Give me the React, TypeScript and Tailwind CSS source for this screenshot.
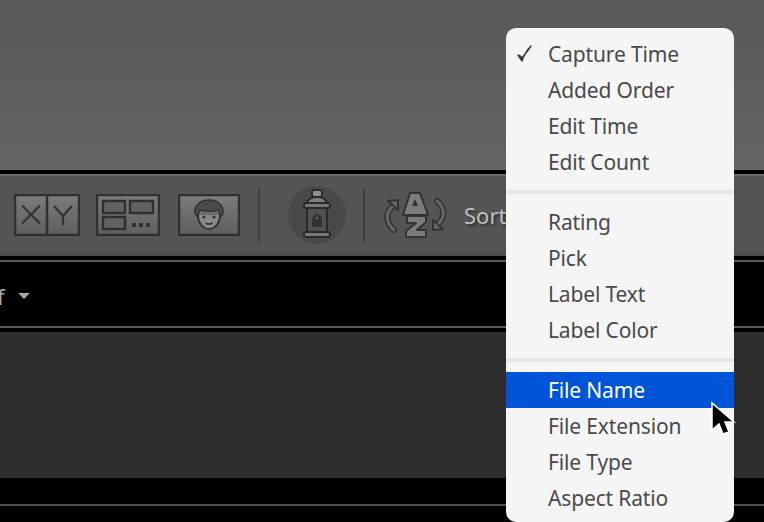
import React from 'react';

const groups = [
  ['Capture Time', 'Added Order', 'Edit Time', 'Edit Count'],
  ['Rating', 'Pick', 'Label Text', 'Label Color'],
  ['File Name', 'File Extension', 'File Type', 'Aspect Ratio'],
];

const XYIcon = () => (
  <svg width="66" height="42" viewBox="0 0 66 42" fill="none">
    <defs>
      <linearGradient id="btn" x1="0" y1="0" x2="0" y2="1">
        <stop offset="0" stopColor="#7c7c7c" />
        <stop offset="1" stopColor="#5e5e5e" />
      </linearGradient>
    </defs>
    <rect x="1" y="1" width="64" height="40" fill="url(#btn)" stroke="#303030" strokeWidth="2.500" />
    <path d="M33 1v40" stroke="#303030" strokeWidth="2.500" />
    <path d="M8 11.500l18 18M26 11.500l-18 18" stroke="#333" strokeWidth="2.200" />
    <path d="M40 12l9 10 9-10M49 22v9" stroke="#333" strokeWidth="2.200" />
  </svg>
);

const MetaIcon = () => (
  <svg width="64" height="42" viewBox="0 0 64 42" fill="none">
    <rect x="1" y="1" width="62" height="40" fill="url(#btn)" stroke="#303030" strokeWidth="2.500" />
    <rect x="7" y="7" width="22" height="12" fill="#626262" stroke="#303030" strokeWidth="2.500" />
    <rect x="34" y="7" width="23" height="12" fill="#626262" stroke="#303030" strokeWidth="2.500" />
    <rect x="7" y="23" width="22" height="12" fill="#626262" stroke="#303030" strokeWidth="2.500" />
    <path d="M36 29h4v4h-4zM43 29h4v4h-4zM50 29h4v4h-4z" fill="#303030" />
  </svg>
);

const FaceIcon = () => (
  <svg width="62" height="42" viewBox="0 0 62 42" fill="none">
    <rect x="1" y="1" width="60" height="40" fill="url(#btn)" stroke="#303030" strokeWidth="2.500" />
    <path d="M20 21c0 8 5 14 11 14s11-6 11-14" fill="#8a8a8a" stroke="#333" strokeWidth="2" />
    <path d="M17 20c-1.500-8 5-14 14-14s15.500 6 14 14l-3 3c0-3-.5-5-2-7-5 1.500-13 1.500-18 0-1.500 2-2 4-2 7z" fill="#4a4a4a" stroke="#333" strokeWidth="1.500" strokeLinejoin="round" />
    <circle cx="26" cy="23" r="1.600" fill="#333" />
    <circle cx="36" cy="23" r="1.600" fill="#333" />
    <path d="M27.500 29c2 1.200 5 1.200 7 0" stroke="#333" strokeWidth="1.500" />
  </svg>
);

const SprayIcon = () => (
  <svg width="58" height="58" viewBox="0 0 58 58" fill="none">
    <circle cx="29" cy="29" r="29" fill="#494949" />
    <rect x="24" y="4" width="10" height="7" rx="2" fill="#8f8f8f" stroke="#2a2a2a" strokeWidth="2" />
    <path d="M19 17c1-4 5-6 10-6s9 2 10 6z" fill="#7f7f7f" stroke="#2a2a2a" strokeWidth="2" />
    <rect x="16" y="17" width="26" height="5" rx="2" fill="#777" stroke="#2a2a2a" strokeWidth="2" />
    <rect x="19" y="22" width="20" height="24" fill="#505050" stroke="#2a2a2a" strokeWidth="2" />
    <rect x="16" y="46" width="26" height="5" rx="2" fill="#777" stroke="#2a2a2a" strokeWidth="2" />
    <path d="M29 27l5 5v9H24v-9z" fill="#333" />
    <circle cx="29" cy="32" r="1.200" fill="#666" />
  </svg>
);

const SortIcon = () => (
  <svg width="66" height="50" viewBox="0 0 66 50" fill="none">
    {/* left arrow */}
    <path d="M9 17C2 23 3 33 11 40" stroke="#333" strokeWidth="6" strokeLinecap="round" />
    <path d="M5 11l10-1v10z" fill="#666" stroke="#333" strokeWidth="2" strokeLinejoin="round" />
    <path d="M9 17C2 23 3 33 11 40" stroke="#666" strokeWidth="3" strokeLinecap="round" />
    {/* right arrow */}
    <path d="M54 11C62 18 62 27 56 33" stroke="#333" strokeWidth="6" strokeLinecap="round" />
    <path d="M60 39l-10 1V30z" fill="#666" stroke="#333" strokeWidth="2" strokeLinejoin="round" />
    <path d="M54 11C62 18 62 27 56 33" stroke="#666" strokeWidth="3" strokeLinecap="round" />
    {/* A over Z */}
    <path d="M27 3h10l8 22H20z" fill="#7c7c7c" stroke="#333" strokeWidth="2" strokeLinejoin="round" />
    <path d="M29 16l3-7 3 7z" fill="#333" />
    <path d="M24 26h19v6l-9 8h9v7H23v-6l10-8h-9z" fill="#7c7c7c" stroke="#333" strokeWidth="2" strokeLinejoin="round" />
  </svg>
);

export default function App() {
  return (
    <div className="relative w-[764px] h-[522px] overflow-hidden bg-black font-['Noto_Sans',sans-serif]">
      <div className="h-[170px] bg-gradient-to-b from-[#585858] to-[#646464]" />
      <div className="h-[4px] bg-black" />
      <div className="h-[2px] bg-[#6a6a6a]" />

      {/* library filter toolbar */}
      <div className="h-[80px] bg-[#545454] border-b-[4px] border-[#4c4c4c] flex items-center pl-[14px] pt-[2px]">
        <XYIcon />
        <div className="ml-[16px]"><MetaIcon /></div>
        <div className="ml-[18px]"><FaceIcon /></div>
        <div className="ml-[18px] w-[2px] h-[54px] bg-[#404040]" />
        <div className="ml-[28px]"><SprayIcon /></div>
        <div className="ml-[17px] w-[2px] h-[54px] bg-[#404040]" />
        <div className="ml-[18px]"><SortIcon /></div>
        <span className="ml-[15px] text-[22px] text-[#bdbdbd] [text-shadow:2px_2px_2px_#333]">Sort</span>
      </div>

      <div className="h-[4px] bg-black" />
      <div className="h-[2px] bg-[#5a5a5a]" />
      <div className="h-[64px] bg-black flex items-center text-[#a8a8a8] text-[22px] -ml-[3px] pt-[4px]">
        <span className="leading-none">f</span>
        <span className="ml-[13px] w-0 h-0 border-x-[6px] border-x-transparent border-t-[6px] border-t-[#a8a8a8]" />
      </div>
      <div className="h-[2px] bg-[#5a5a5a]" />
      <div className="h-[4px] bg-black" />
      <div className="h-[146px] bg-[#2e2e2e]" />
      <div className="h-[26px] bg-black" />
      <div className="h-[2px] bg-[#4e4e4e]" />

      {/* sort menu */}
      <div className="absolute left-[506px] top-[28px] w-[228px] h-[494px] rounded-[10px] bg-[#f5f5f5] pt-[8px] overflow-hidden text-[21px] tracking-[-0.15px] text-[#4a4a4a]">
        {groups.map((items, g) => (
          <div key={g}>
            {g > 0 && <div className="h-[4px] my-[10px] bg-[#e8e8e8]" />}
            {items.map(label => (
              <div key={label} className={`relative h-[36px] leading-[36px] pl-[42px] whitespace-nowrap ${label === 'File Name' ? 'bg-[#0054d8] text-white' : ''}`}>
                {label === 'Capture Time' && (
                  <svg className="absolute left-[10px] top-[8px]" width="18" height="20" viewBox="0 0 18 20" fill="none">
                    <path d="M2 11l4 6C8 11 11 6 15 2L6.500 13.500z" fill="#3c3c3c" stroke="#3c3c3c" strokeWidth="1.500" strokeLinejoin="round" />
                  </svg>
                )}
                {label}
              </div>
            ))}
          </div>
        ))}
      </div>

      {/* pointer */}
      <svg className="absolute left-[708px] top-[400px]" width="30" height="42" viewBox="0 0 30 42">
        <path d="M4 3v27l7-6 4 10 6-2-4-10h9z" fill="#000" stroke="#fff" strokeWidth="1.500" />
      </svg>
    </div>
  );
}
